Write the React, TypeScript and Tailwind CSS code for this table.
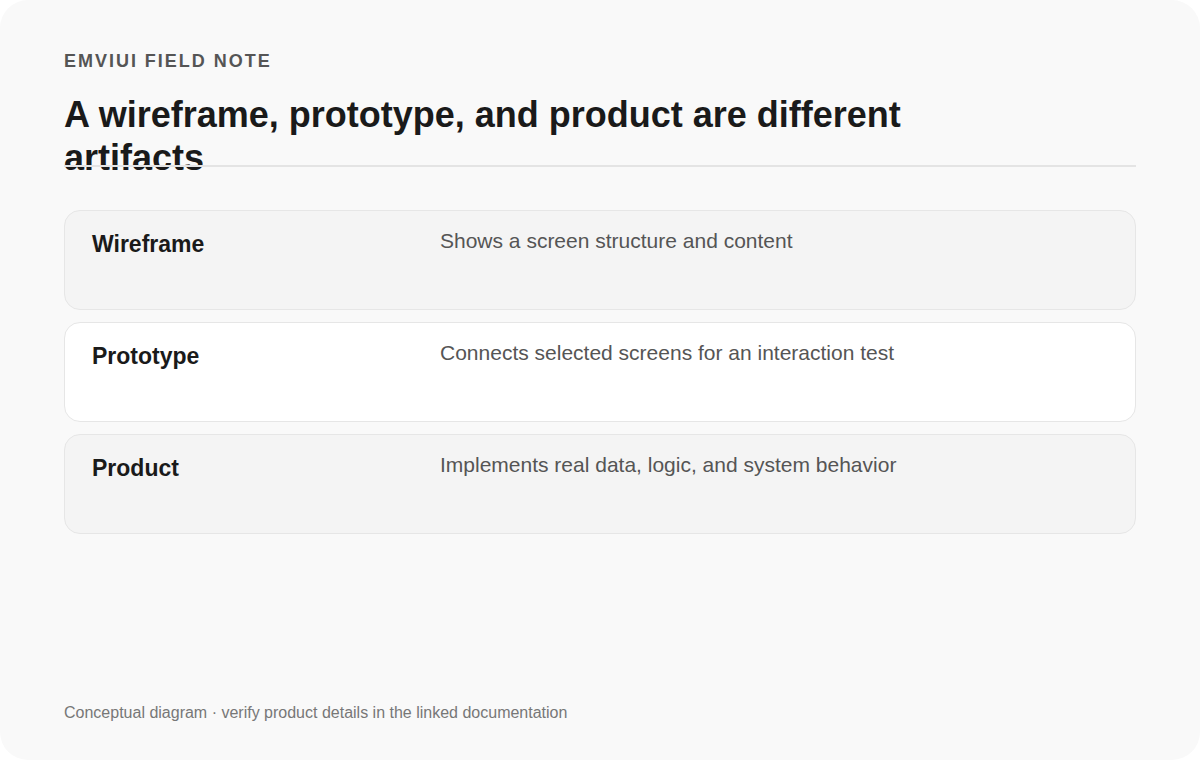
const rows = [
  { label: "Wireframe", text: "Shows a screen structure and content", tone: "muted" },
  { label: "Prototype", text: "Connects selected screens for an interaction test", tone: "white" },
  { label: "Product", text: "Implements real data, logic, and system behavior", tone: "muted" },
];

export default function App() {
  return (
    <div className="w-[1200px] h-[760px] bg-white font-['Liberation_Sans',Arial,sans-serif]">
      <div className="flex flex-col h-full rounded-[28px] bg-[#f9f9f9] px-16 pt-12 pb-[37px]">
        {/* Header */}
        <div className="h-[117px]">
          <p className="text-[18px] leading-[27px] font-bold tracking-[0.11em] text-[#555555]">
            EMVIUI FIELD NOTE
          </p>
          <h1 className="mt-[18px] max-w-[900px] text-[36px] leading-[1.2] font-bold text-[#1a1a1a]">
            A wireframe, prototype, and product are different artifacts
          </h1>
        </div>
        {/* divider sits over the overflowing title */}
        <div className="relative h-[2px] bg-[#e4e4e4]" />

        {/* Rows */}
        <div className="mt-[43px] flex flex-col gap-3">
          {rows.map((row) => (
            <div
              key={row.label}
              className={
                "grid grid-cols-[320px_1fr] gap-7 h-[100px] px-[27px] pt-[18px] rounded-2xl border border-[#e6e6e6] " +
                (row.tone === "white" ? "bg-white" : "bg-[#f4f4f4]")
              }
            >
              <div className="text-[23px] leading-[30px] font-bold text-[#1a1a1a]">{row.label}</div>
              <div className="text-[21px] leading-[24px] text-[#555555]">{row.text}</div>
            </div>
          ))}
        </div>

        {/* Footer */}
        <p className="mt-auto text-[16px] leading-[20px] text-[#777777]">
          Conceptual diagram · verify product details in the linked documentation
        </p>
      </div>
    </div>
  );
}
